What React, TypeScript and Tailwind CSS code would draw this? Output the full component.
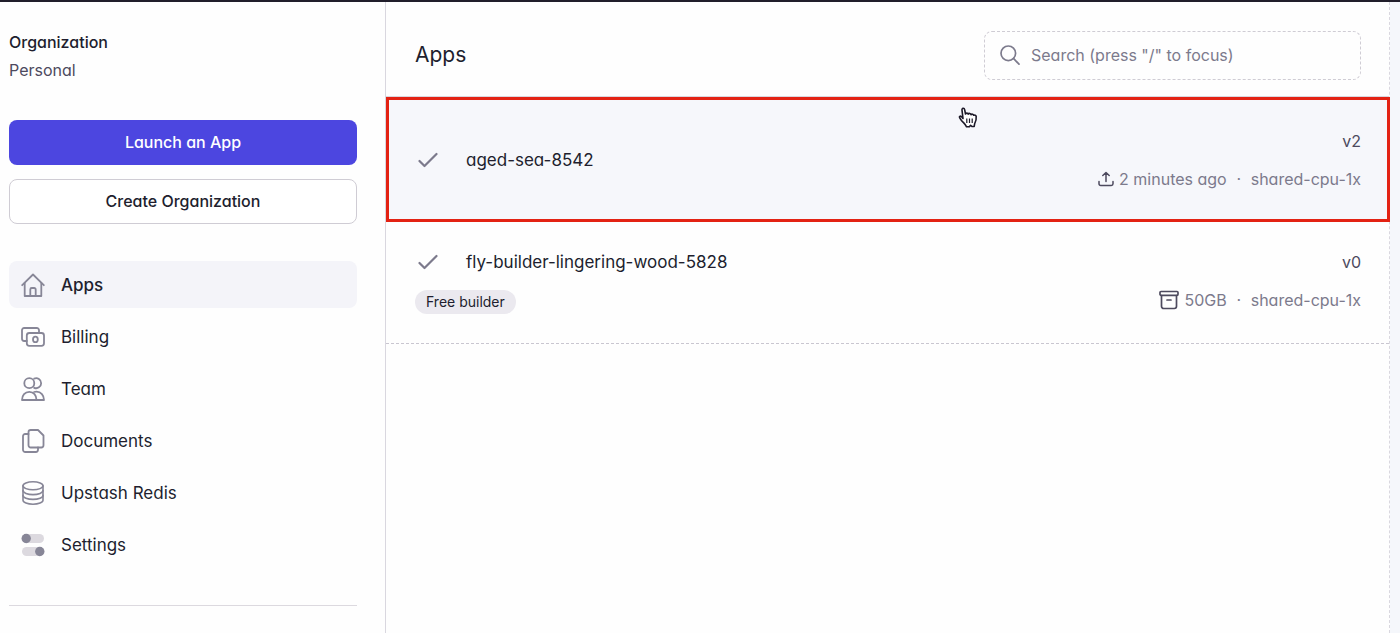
import React from 'react';

type IconProps = { className?: string };

const line = {
  fill: 'none',
  stroke: 'currentColor',
  strokeLinecap: 'round' as const,
  strokeLinejoin: 'round' as const,
  'aria-hidden': true,
};

const HomeIcon = () => (
  <svg {...line} viewBox="0 0 24 24" strokeWidth="1.8" className="size-6">
    <path d="M1.2 12.2 12 1.5l10.8 10.7" />
    <path d="M3.7 10V23h16.6V10" />
    <path d="M9.3 23v-6.5a1.5 1.5 0 0 1 1.5-1.5h2.4a1.5 1.5 0 0 1 1.5 1.5V23" />
  </svg>
);

const BillingIcon = () => (
  <svg {...line} viewBox="0 0 24 24" strokeWidth="1.8" className="size-6">
    <path d="M5.8 16H3.2A2.2 2.2 0 0 1 1 13.8V5.200A2.2 2.2 0 0 1 3.2 3h12.600A2.2 2.2 0 0 1 18 5.200V8" />
    <rect x="5.8" y="8" width="17.2" height="12.8" rx="2.5" />
    <ellipse cx="14.4" cy="14.4" rx="2.4" ry="2.800" />
  </svg>
);

const TeamIcon = () => (
  <svg {...line} viewBox="0 0 24 24" strokeWidth="1.8" className="size-6">
    <circle cx="8.3" cy="6.2" r="5" />
    <path d="M13.2 1.6a5 5 0 1 1 0 9.2" />
    <path d="M1 23c0-4.8 3-8.200 7.300-8.200s7.200 3.400 7.200 8.200z" />
    <path d="M13 15c.8-.2 1.600-.3 2.500-.3 4.500 0 7.500 3.500 7.500 8.300h-7.500" />
  </svg>
);

const DocumentsIcon = () => (
  <svg {...line} viewBox="0 0 24 24" strokeWidth="1.8" className="size-6">
    <path d="M7.5 3.2A2.2 2.2 0 0 1 9.700 1h7.300l5.500 5.500v9.800a2.200 2.200 0 0 1-2.200 2.200H9.700a2.200 2.200 0 0 1-2.200-2.200z" />
    <path d="M7.5 5H4.200A2.200 2.200 0 0 0 2 7.200v13.600A2.200 2.200 0 0 0 4.200 23h10.600a2.200 2.200 0 0 0 2.200-2.200v-2.300" />
  </svg>
);

const RedisIcon = () => (
  <svg {...line} viewBox="0 0 24 24" strokeWidth="1.6" className="size-6">
    <ellipse cx="12" cy="4.8" rx="10" ry="4" />
    <path d="M2 4.8v14.400c0 2.200 4.500 4 10 4s10-1.800 10-4V4.800" />
    <path d="M2 9.6c0 2.200 4.500 4 10 4s10-1.800 10-4" />
    <path d="M2 14.4c0 2.200 4.500 4 10 4s10-1.800 10-4" />
  </svg>
);

const SettingsIcon = () => (
  <svg viewBox="0 0 24 24" className="size-6" aria-hidden>
    <rect x="1" y="1" width="22" height="9" rx="4.5" fill="#dcd9df" />
    <circle cx="5.2" cy="5.5" r="4.7" fill="#878697" />
    <rect x="1" y="14" width="22" height="9" rx="4.5" fill="#dcd9df" />
    <circle cx="18.8" cy="18.5" r="4.7" fill="#878697" />
  </svg>
);

const SearchIcon = () => (
  <svg {...line} viewBox="0 0 20 20" strokeWidth="1.7" className="size-5 shrink-0 text-[#7c7a8c]">
    <circle cx="8.3" cy="8.3" r="7.3" />
    <path d="m13.7 13.7 5.3 5.500" />
  </svg>
);

const CheckIcon = () => (
  <svg {...line} viewBox="0 0 20 16" strokeWidth="2.2" className="h-4 w-5 shrink-0 text-[#7c7a8c]">
    <path d="m1.500 9 5 5L18.500 2" />
  </svg>
);

const UploadIcon = ({ className }: IconProps) => (
  <svg {...line} viewBox="0 0 16 16" strokeWidth="1.5" className={className}>
    <path d="M8 10.500V1.500M4.800 4.500 8 1.500l3.200 3" />
    <path d="M1 10.500v2.300A1.700 1.700 0 0 0 2.700 14.500h10.600a1.700 1.700 0 0 0 1.700-1.700v-2.300" />
  </svg>
);

const ArchiveIcon = ({ className }: IconProps) => (
  <svg {...line} viewBox="0 0 20 20" strokeWidth="1.7" className={className}>
    <rect x="1" y="1.5" width="18" height="3.8" rx="1" />
    <path d="M2.500 5.500v10.800a2.200 2.200 0 0 0 2.200 2.200h10.600a2.200 2.200 0 0 0 2.200-2.200V5.500M8 10h4" />
  </svg>
);

const HandCursor = () => (
  <svg
    viewBox="0 0 20 21"
    className="pointer-events-none absolute left-[57%] top-[7px] h-[21px] w-5"
    aria-hidden
  >
    <path
      d="M5 11.500 4 3.200C3.700.8 6.300.6 6.700 2.800l.8 4.200c.3-1.300 2.400-1.200 2.700.2.500-1.200 2.500-1 2.800.5.700-1 2.300-.6 2.700.6.900-.6 2.300-.2 2.500 1.100.3 3-.3 5.300-1.600 7.400l-.4 2.700h-2.300l-1.300-1.200-1.200 1.400H8.500c-.7-2.200-3.200-4-5.400-6.800C1.300 10.700 1 9.500 2 9.200c1-.3 2 .6 3 2.300z"
      fill="#fff"
      stroke="#1c1928"
      strokeWidth="1.6"
      strokeLinejoin="round"
    />
    <path d="M8.800 11.500v4.500M11.500 11.500v4.500M14.200 11.500v4.500" stroke="#1c1928" strokeWidth="1.2" />
  </svg>
);

const nav = [
  { label: 'Apps', icon: <HomeIcon />, active: true },
  { label: 'Billing', icon: <BillingIcon /> },
  { label: 'Team', icon: <TeamIcon /> },
  { label: 'Documents', icon: <DocumentsIcon /> },
  { label: 'Upstash Redis', icon: <RedisIcon /> },
  { label: 'Settings', icon: <SettingsIcon /> },
];

type AppRowProps = {
  name: string;
  version: string;
  icon: React.ReactNode;
  detail: string;
  badge?: string;
  highlighted?: boolean;
};

const AppRow = ({ name, version, icon, detail, badge, highlighted }: AppRowProps) => (
  <li
    className={
      highlighted
        ? 'relative -mr-px border-[3px] border-[#e32213] bg-[#f6f7fb] px-[26px] pt-[29px] pb-7'
        : 'border-b border-dashed border-[#c9c6d0] pl-[29px] pr-7 pt-7 pb-[29px]'
    }
  >
    {highlighted && <HandCursor />}
    <a href="#" className={badge ? 'flex items-start justify-between' : 'flex items-center justify-between'}>
      <div className="flex flex-col items-start gap-4">
        <div className="flex items-center gap-7 pl-[3px]">
          <CheckIcon />
          <span className="text-[17px] text-[#211e2e]">{name}</span>
        </div>
        {badge && (
          <span className="rounded-full bg-[#ebe9ef] px-[11px] text-sm leading-6 text-[#211e2e]">
            {badge}
          </span>
        )}
      </div>
      <div className="flex flex-col items-end gap-[14px] text-[#7c7a8c]">
        <span className="text-[#4d4a5e]">{version}</span>
        <span className="flex items-center">
          {icon}
          <span>{detail}</span>
          <span className="w-6 text-center">·</span>
          <span>shared-cpu-1x</span>
        </span>
      </div>
    </a>
  </li>
);

export default function App() {
  return (
    <div className="flex min-h-screen flex-col border-t-2 border-[#211e2b] bg-[#fefefe] font-['Inter',sans-serif] text-base leading-6 text-[#211e2e] [font-feature-settings:'cv11']">
      <div className="flex grow">
        <aside className="w-[386px] shrink-0 border-r border-[#d9d7df] pl-[9px] pr-7 pt-[26px]">
          <p className="font-medium leading-7">Organization</p>
          <p className="leading-7 text-[#4d4a5e]">Personal</p>
          <div className="mt-9 flex flex-col gap-[14px]">
            <button className="h-[45px] rounded-lg bg-[#4c46e0] pb-0.5 font-medium text-white">
              Launch an App
            </button>
            <button className="h-[45px] rounded-lg border border-[#cfccd4] bg-white pb-0.5 font-medium">
              Create Organization
            </button>
          </div>
          <nav className="mt-[37px] flex flex-col gap-[5px] text-[17px]">
            {nav.map((item) => (
              <a
                key={item.label}
                href="#"
                className={
                  item.active
                    ? 'flex h-[47px] items-center gap-4 rounded-lg bg-[#f4f4f9] px-3 font-medium'
                    : 'flex h-[47px] items-center gap-4 rounded-lg px-3'
                }
              >
                <span className="text-[#878697]">{item.icon}</span>
                {item.label}
              </a>
            ))}
          </nav>
          <hr className="mt-[37px] border-[#dcd9df]" />
        </aside>
        <main className="min-w-0 grow border-r border-dashed border-[#d9d7df]">
          <header className="flex h-[95px] items-center justify-between border-b border-[#d9d7df] pl-[29px] pr-7 pt-3">
            <h1 className="text-[21px] leading-8">Apps</h1>
            <label className="flex h-[49px] w-[377px] items-center gap-[11px] rounded-lg border border-dashed border-[#cfccd4] px-[15px]">
              <SearchIcon />
              <input
                type="search"
                aria-label="Search apps"
                placeholder={'Search (press "/" to focus)'}
                className="min-w-0 grow bg-transparent outline-none placeholder:text-[#7c7a8c]"
              />
            </label>
          </header>
          <ul>
            <AppRow
              name="aged-sea-8542"
              version="v2"
              icon={<UploadIcon className="mr-[5px] size-4 text-[#4d4a5e]" />}
              detail="2 minutes ago"
              highlighted
            />
            <AppRow
              name="fly-builder-lingering-wood-5828"
              version="v0"
              icon={<ArchiveIcon className="mr-[5px] size-5 text-[#4d4a5e]" />}
              detail="50GB"
              badge="Free builder"
            />
          </ul>
        </main>
        <div className="w-[10px] shrink-0 bg-[#f5f7fb]" />
      </div>
    </div>
  );
}
